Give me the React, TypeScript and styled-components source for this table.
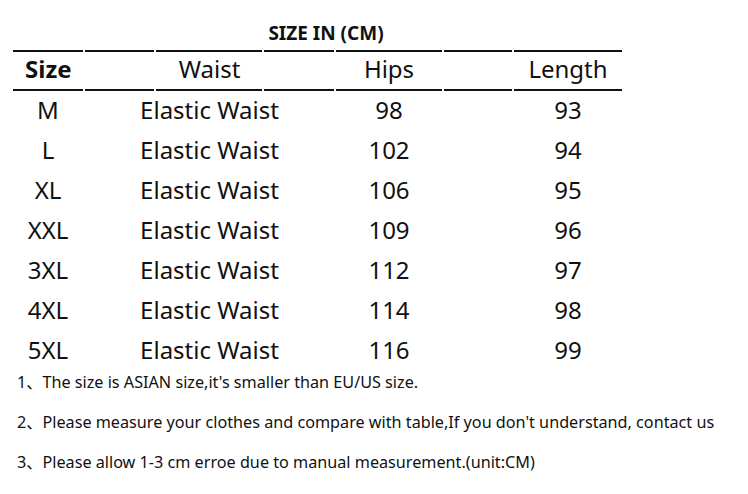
import React from "react";
import styled, { createGlobalStyle } from "styled-components";

const GlobalStyle = createGlobalStyle`
  html, body {
    margin: 0;
    padding: 0;
    background: #fff;
  }
  body {
    font-family: "Noto Sans", "Noto Sans CJK SC", sans-serif;
    color: #111;
  }
`;

const Page = styled.div`
  width: 748px;
  height: 494px;
  padding-top: 21px;
  box-sizing: border-box;
  overflow: hidden;
`;

const Title = styled.div`
  width: 608px;
  margin-left: 13px;
  padding-left: 18px;
  box-sizing: border-box;
  height: 24px;
  line-height: 24px;
  text-align: center;
  font-size: 19px;
  font-weight: 700;
  margin-bottom: 5px;
`;

const Table = styled.div`
  margin-left: 13px;
  width: 609px;
  display: grid;
  grid-template-columns: 70px 69px 106px 70px 106px 68px 108px;
  column-gap: 2px;
`;

const HeadRule = styled.div<{ $col: number }>`
  grid-row: 1;
  grid-column: ${(p) => p.$col};
  height: 41px;
  border-top: 2px solid #111;
  border-bottom: 2px solid #111;
  box-sizing: border-box;
`;

const HeadLabel = styled.div<{ $from: number; $to: number; $bold?: boolean }>`
  grid-row: 1;
  grid-column: ${(p) => p.$from} / ${(p) => p.$to};
  display: flex;
  align-items: center;
  justify-content: ${(p) => (p.$bold ? "flex-start" : "center")};
  padding-left: ${(p) => (p.$bold ? "12px" : "0")};
  padding-bottom: 4px;
  font-size: 24px;
  font-weight: ${(p) => (p.$bold ? 700 : 400)};
`;

const Cell = styled.div<{ $from: number; $to: number; $row: number }>`
  grid-row: ${(p) => p.$row};
  grid-column: ${(p) => p.$from} / ${(p) => p.$to};
  height: 40px;
  box-sizing: border-box;
  padding-bottom: 4px;
  display: flex;
  align-items: center;
  justify-content: center;
  font-size: 24px;
`;

const Notes = styled.ul`
  list-style: none;
  margin: 0;
  padding: 0 0 0 17px;
  display: flex;
  flex-direction: column;
  gap: 18px;
`;

const Note = styled.li`
  line-height: 22px;
  font-size: 16.2px;
  white-space: nowrap;
`;

const rows = [
  ["M", "98", "93"],
  ["L", "102", "94"],
  ["XL", "106", "95"],
  ["XXL", "109", "96"],
  ["3XL", "112", "97"],
  ["4XL", "114", "98"],
  ["5XL", "116", "99"],
];

const notes = [
  "1、The size is ASIAN size,it's smaller than EU/US size.",
  "2、Please measure your clothes and compare with table,If you don't understand, contact us",
  "3、Please allow 1-3 cm erroe due to manual measurement.(unit:CM)",
];

export default function App() {
  return (
    <>
      <GlobalStyle />
      <Page>
        <Title>SIZE IN (CM)</Title>
        <Table>
          {[1, 2, 3, 4, 5, 6, 7].map((c) => (
            <HeadRule key={c} $col={c} />
          ))}
          <HeadLabel $from={1} $to={2} $bold>
            Size
          </HeadLabel>
          <HeadLabel $from={2} $to={5}>Waist</HeadLabel>
          <HeadLabel $from={5} $to={6}>Hips</HeadLabel>
          <HeadLabel $from={7} $to={8}>Length</HeadLabel>
          {rows.map(([size, hips, length], i) => (
            <React.Fragment key={size}>
              <Cell $row={i + 2} $from={1} $to={2}>{size}</Cell>
              <Cell $row={i + 2} $from={2} $to={5}>Elastic Waist</Cell>
              <Cell $row={i + 2} $from={5} $to={6}>{hips}</Cell>
              <Cell $row={i + 2} $from={7} $to={8}>{length}</Cell>
            </React.Fragment>
          ))}
        </Table>
        <Notes>
          {notes.map((n) => (
            <Note key={n}>{n}</Note>
          ))}
        </Notes>
      </Page>
    </>
  );
}
